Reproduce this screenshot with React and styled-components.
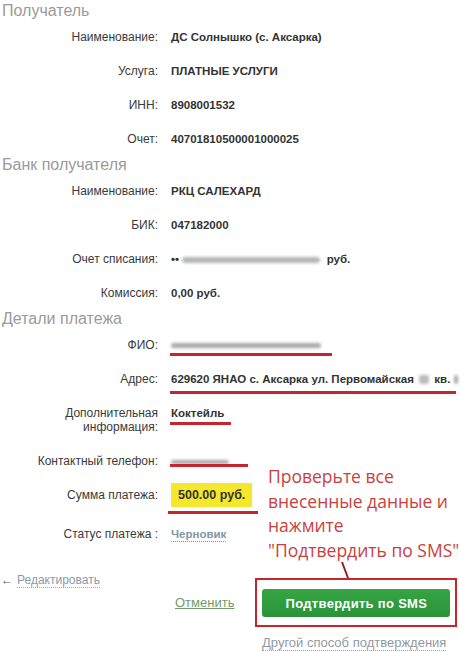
import React from 'react';
import styled, { createGlobalStyle } from 'styled-components';

const GlobalStyle = createGlobalStyle`
  html, body { margin: 0; padding: 0; background: #fff; }
  body { font-family: "Liberation Sans", Arial, sans-serif; color: #333; }
`;

const Page = styled.div`
  position: relative;
  width: 460px;
  height: 652px;
  overflow: hidden;
  padding-top: 2px;
  box-sizing: border-box;
`;

const SectionTitle = styled.div`
  height: 18px;
  line-height: 18px;
  font-size: 16px;
  color: #9a9a9a;
  padding-left: 2px;
`;

const Row = styled.div`
  display: grid;
  grid-template-columns: 158px 1fr;
  column-gap: 13px;
  padding: 10px 0;
  line-height: 14px;
  font-size: 12px;
`;

const Label = styled.div`
  text-align: right;
  color: #3a3a3a;
`;

const Value = styled.div`
  font-weight: bold;
  font-size: 11.5px;
  color: #333;
  white-space: nowrap;
`;

const Marked = styled.span`
  display: inline-block;
  position: relative;
  &::after {
    content: '';
    position: absolute;
    left: ${p => p.$left || -1}px;
    width: ${p => p.$w}px;
    top: ${p => p.$top || 18}px;
    height: 3px;
    background: #c4262e;
  }
`;

const Blur = styled.span`
  display: inline-block;
  vertical-align: middle;
  width: ${p => p.$w}px;
  height: ${p => p.$h || 5}px;
  background: ${p => p.$c || '#a9a9a9'};
  border-radius: 3px;
  filter: blur(1.6px);
  margin: 0 ${p => p.$m || 0}px;
`;

const Highlight = styled.span`
  display: inline-block;
  background: #f5e82c;
  font-size: 12.5px;
  padding: 5px 7px;
  margin-top: -6px;
  position: relative;
  &::after {
    content: '';
    position: absolute;
    left: -3px;
    width: 90px;
    top: 28px;
    height: 3px;
    background: #c4262e;
  }
`;

const Draft = styled.span`
  color: #7f97a8;
  border-bottom: 1px dotted #7f97a8;
  padding-bottom: 1px;
`;

const Bottom = styled.div`
  margin-top: 22px;
  display: flex;
  align-items: flex-start;
`;

const BackLink = styled.div`
  flex: none;
  width: 174px;
  font-size: 12px;
  line-height: 15px;
  color: #8a9aa4;
  padding-left: 1px;
  span.t {
    border-bottom: 1px dotted #9aa8b0;
  }
  span.a {
    color: #555;
    margin-right: 4px;
  }
`;

const RightColumn = styled.div`
  display: flex;
  flex-direction: column;
  margin-top: 5px;
`;

const ActionRow = styled.div`
  display: flex;
  align-items: center;
`;

const Cancel = styled.span`
  font-size: 13px;
  color: #6d9c6a;
  text-decoration: underline;
  margin-right: 21px;
`;

const FrameBox = styled.div`
  position: relative;
  border: 2px solid #c8242c;
  padding: 9px 5px 8px 5px;
`;

const ConfirmButton = styled.button`
  display: block;
  width: 188px;
  height: 28px;
  border: none;
  border-radius: 3px;
  background: linear-gradient(#36a544, #2a9339);
  color: #fff;
  font-family: "Liberation Sans", Arial, sans-serif;
  font-weight: bold;
  font-size: 13px;
  letter-spacing: 0.3px;
`;

const OtherWay = styled.div`
  margin: 8px 0 0 87px;
  font-size: 13px;
  line-height: 15px;
  color: #8f9aa0;
  white-space: nowrap;
  span {
    border-bottom: 1px dotted #9aa4a8;
  }
`;

const Note = styled.div`
  position: absolute;
  left: 268px;
  top: 464px;
  font-family: "Open Sans", "Noto Sans", sans-serif;
  font-size: 17.5px;
  line-height: 24.5px;
  color: #c93f40;
  white-space: nowrap;
`;

const Connector = styled.svg`
  position: absolute;
  left: 338px;
  top: 560px;
`;

export default function App() {
  return (
    <Page>
      <GlobalStyle />
      <SectionTitle>Получатель</SectionTitle>
      <Row><Label>Наименование:</Label><Value>ДС Солнышко (с. Аксарка)</Value></Row>
      <Row><Label>Услуга:</Label><Value>ПЛАТНЫЕ УСЛУГИ</Value></Row>
      <Row><Label>ИНН:</Label><Value>8908001532</Value></Row>
      <Row><Label>Очет:</Label><Value>40701810500001000025</Value></Row>

      <SectionTitle>Банк получателя</SectionTitle>
      <Row><Label>Наименование:</Label><Value>РКЦ САЛЕХАРД</Value></Row>
      <Row><Label>БИК:</Label><Value>047182000</Value></Row>
      <Row>
        <Label>Очет списания:</Label>
        <Value>•• <Blur $w={138} $h={6} $c="#b5b5b5" /> &nbsp;руб.</Value>
      </Row>
      <Row><Label>Комиссия:</Label><Value>0,00 руб.</Value></Row>

      <SectionTitle>Детали платежа</SectionTitle>
      <Row>
        <Label>ФИО:</Label>
        <Value><Marked $w={162} $top={15}><Blur $w={150} $h={5} /></Marked></Value>
      </Row>
      <Row>
        <Label>Адрес:</Label>
        <Value>
          <Marked $w={286} $top={19}>629620 ЯНАО с. Аксарка ул. Первомайская <Blur $w={10} $h={9} $c="#bbb" $m={2} /> кв. <Blur $w={4} $h={9} $c="#aaa" /></Marked>
        </Value>
      </Row>
      <Row>
        <Label>Дополнительная<br />информация:</Label>
        <Value><Marked $w={61} $top={16}>Коктейль</Marked></Value>
      </Row>
      <Row>
        <Label>Контактный телефон:</Label>
        <Value><Marked $w={78} $top={10}><Blur $w={58} $h={4} /></Marked></Value>
      </Row>
      <Row>
        <Label>Сумма платежа:</Label>
        <Value><Highlight>500.00 руб.</Highlight></Value>
      </Row>
      <Row>
        <Label>Статус платежа :</Label>
        <Value><Draft>Черновик</Draft></Value>
      </Row>

      <Bottom>
        <BackLink><span className="a">←</span><span className="t">Редактировать</span></BackLink>
        <RightColumn>
          <ActionRow>
            <Cancel>Отменить</Cancel>
            <FrameBox>
              <ConfirmButton>Подтвердить по SMS</ConfirmButton>
            </FrameBox>
          </ActionRow>
          <OtherWay><span>Другой способ подтверждения</span></OtherWay>
        </RightColumn>
      </Bottom>

      <Note>
        Проверьте все<br />
        внесенные данные и<br />
        нажмите<br />
        "Подтвердить по SMS"
      </Note>
      <Connector width="16" height="20" viewBox="0 0 16 20">
        <line x1="4" y1="2" x2="10" y2="18" stroke="#8e1d22" strokeWidth="2" />
      </Connector>
    </Page>
  );
}
